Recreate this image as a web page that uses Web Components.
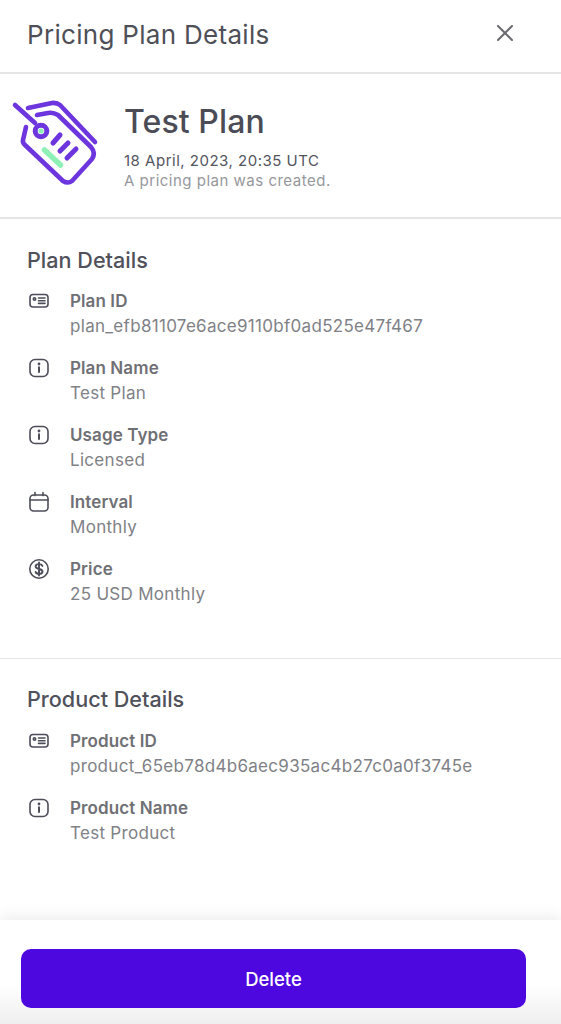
<!DOCTYPE html>
<html>
<head>
<meta charset="utf-8">
<title>Pricing Plan Details</title>
<style>
  html, body { margin: 0; padding: 0; background: #fff; }
  body { font-family: Inter, "Liberation Sans", sans-serif; height: 1024px; overflow: hidden; }
</style>
</head>
<body>
<plan-panel>
  <panel-header slot="header" title="Pricing Plan Details"></panel-header>
  <plan-hero slot="hero" name="Test Plan" date="18 April, 2023, 20:35 UTC" note="A pricing plan was created."></plan-hero>

  <detail-section heading="Plan Details" style="--pad-top:29px;--pad-bottom:51px;--rule:1px;--gap:17px">
    <detail-row icon="card" label="Plan ID" value="plan_efb81107e6ace9110bf0ad525e47f467"></detail-row>
    <detail-row icon="info" label="Plan Name" value="Test Plan"></detail-row>
    <detail-row icon="info" label="Usage Type" value="Licensed"></detail-row>
    <detail-row icon="calendar" label="Interval" value="Monthly"></detail-row>
    <detail-row icon="dollar" label="Price" value="25 USD Monthly"></detail-row>
  </detail-section>

  <detail-section heading="Product Details" style="--pad-top:28px;--pad-bottom:0px;--rule:0px;--gap:18px">
    <detail-row icon="card" label="Product ID" value="product_65eb78d4b6aec935ac4b27c0a0f3745e"></detail-row>
    <detail-row icon="info" label="Product Name" value="Test Product"></detail-row>
  </detail-section>

  <panel-footer slot="footer" action="Delete"></panel-footer>
</plan-panel>

<script>
const ICONS = {
  card: '<rect x="3" y="5.500" width="18" height="12.500" rx="3"/><circle cx="7.500" cy="10" r="1.200"/><path d="M11.500 9h6.500M11.500 11.700h6.500M11.500 14.400h6.500"/>',
  info: '<rect x="3" y="3.500" width="18" height="17" rx="5"/><path d="M12 11.200v4.800" stroke-width="2"/><circle cx="12" cy="8" r=".6"/>',
  calendar: '<rect x="3" y="5" width="18" height="16" rx="3.500"/><path d="M3 10h18M8 2.600v3M16 2.600v3"/>',
  dollar: '<circle cx="12" cy="12" r="9.200"/><path stroke-width="1.900" d="M15.400 8.900c-.5-1.100-1.800-1.800-3.400-1.800-2 0-3.400 1-3.400 2.400 0 3.300 6.900 1.600 6.900 5 0 1.400-1.500 2.400-3.500 2.400-1.700 0-3-.8-3.400-2M12 5.400v13.200"/>'
};

class PlanPanel extends HTMLElement {
  constructor() {
    super();
    this.attachShadow({ mode: 'open' }).innerHTML = `
    <style>
      :host { display: flex; flex-direction: column; height: 1024px; color: #44454f; }
      main { flex: 1; min-height: 0; }
    </style>
    <slot name="header"></slot>
    <slot name="hero"></slot>
    <main><slot></slot></main>
    <slot name="footer"></slot>
    `;
  }
}

class PanelHeader extends HTMLElement {
  constructor() {
    super();
    this.attachShadow({ mode: 'open' }).innerHTML = `
    <style>
      :host { display: flex; align-items: center; justify-content: space-between; box-sizing: border-box; height: 74px; padding: 0 48px 3px 27px; border-bottom: 2px solid #e6e6e6; }
      h1 { margin: 0; font-size: 26px; font-weight: 400; color: #4e4f57; letter-spacing: .3px; }
      svg { display: block; width: 16px; height: 16px; margin-bottom: 3px; fill: none; stroke: #6a6a70; stroke-width: 2; stroke-linecap: round; }
    </style>
    <h1>${this.getAttribute('title')}</h1>
    <svg viewBox="0 0 16 16"><path d="M1 1l14 14M15 1L1 15"/></svg>
    `;
  }
}

class PlanHero extends HTMLElement {
  constructor() {
    super();
    this.attachShadow({ mode: 'open' }).innerHTML = `
    <style>
      :host { display: flex; box-sizing: border-box; height: 145px; border-bottom: 2px solid #e4e4e4; }
      svg { width: 100px; height: 100px; margin-top: 16px; flex: none; fill: none; stroke: #6c35de; stroke-width: 4.600; stroke-linecap: round; stroke-linejoin: round; }
      .copy { margin: 28px 0 0 24px; }
      h2 { margin: 0; font-size: 32px; line-height: 39px; font-weight: 500; color: #4b4c56; letter-spacing: .1px; }
      p { margin: 0; font-size: 15px; line-height: 20px; color: #54555d; letter-spacing: .5px; }
      p.note { color: #96979c; }
      .date { margin-top: 10px; }
    </style>
    <svg viewBox="0 90 100 100">
      <path d="M15 105l20 18"/>
      <path d="M28 108l24-5q5-.5 8 2l35 37"/>
      <path d="M26 127l-3 13q-.5 3 2 5l38 36q5 3 9 0l20-22q4-6-1-12l-33-32q-5-3-10-2l-11 2"/>
      <circle cx="41" cy="131" r="5.800" stroke-width="5"/>
      <circle cx="41" cy="131" r="2.600" fill="#8ef0b4" stroke="none"/>
      <path d="M53 143l7-8M60 151l8-8M67 158l9-9" stroke-width="5"/>
      <path d="M44.500 150l16 15" stroke="#8ef0b4" stroke-width="5.500"/>
    </svg>
    <div class="copy">
      <h2>${this.getAttribute('name')}</h2>
      <p class="date">${this.getAttribute('date')}</p>
      <p class="note">${this.getAttribute('note')}</p>
    </div>
    `;
  }
}

class DetailSection extends HTMLElement {
  constructor() {
    super();
    this.attachShadow({ mode: 'open' }).innerHTML = `
    <style>
      :host { display: block; padding: var(--pad-top) 27px var(--pad-bottom); border-bottom: var(--rule) solid #e4e4e4; }
      h3 { margin: 0 0 var(--gap); font-size: 21.600px; line-height: 24px; font-weight: 500; color: #50515a; }
      .rows { display: flex; flex-direction: column; gap: 17px; }
    </style>
    <h3>${this.getAttribute('heading')}</h3>
    <div class="rows"><slot></slot></div>
    `;
  }
}

class DetailRow extends HTMLElement {
  constructor() {
    super();
    this.attachShadow({ mode: 'open' }).innerHTML = `
    <style>
      :host { display: flex; gap: 19px; height: 50px; }
      svg { width: 24px; height: 24px; flex: none; fill: none; stroke: #4c4d59; stroke-width: 1.600; stroke-linecap: round; stroke-linejoin: round; }
      .label { font-size: 17px; line-height: 25px; font-weight: 600; color: #6f7075; letter-spacing: .1px; }
      .value { font-size: 17px; line-height: 25px; color: #808186; letter-spacing: .3px; }
    </style>
    <svg viewBox="0 0 24 24">${ICONS[this.getAttribute('icon')]}</svg>
    <div>
      <div class="label">${this.getAttribute('label')}</div>
      <div class="value">${this.getAttribute('value')}</div>
    </div>
    `;
  }
}

class PanelFooter extends HTMLElement {
  constructor() {
    super();
    this.attachShadow({ mode: 'open' }).innerHTML = `
    <style>
      :host { display: block; box-sizing: border-box; height: 104px; padding: 29px 35px 0 21px; background: linear-gradient(#fff 62%, #efefef 100%); box-shadow: 0 -3px 14px rgba(0,0,0,.08); }
      button { display: block; width: 100%; height: 59px; border: 0; border-radius: 10px; background: #4d08e0; color: #fff; font: 500 18.500px Inter, "Liberation Sans", sans-serif; }
    </style>
    <button>${this.getAttribute('action')}</button>
    `;
  }
}

customElements.define('plan-panel', PlanPanel);
customElements.define('panel-header', PanelHeader);
customElements.define('plan-hero', PlanHero);
customElements.define('detail-section', DetailSection);
customElements.define('detail-row', DetailRow);
customElements.define('panel-footer', PanelFooter);
</script>
</body>
</html>
